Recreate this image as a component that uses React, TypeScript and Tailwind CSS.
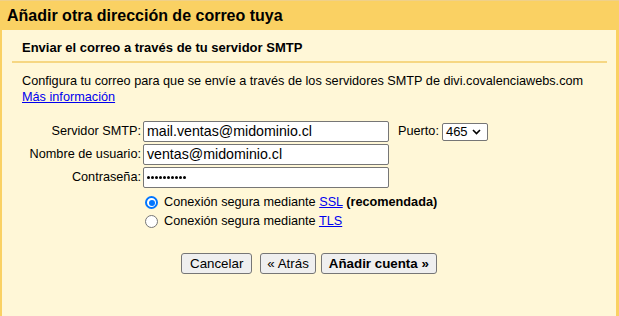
import React from "react";

export default function App() {
  const font = { fontFamily: '"Liberation Sans", Arial, sans-serif' };
  return (
    <div className="w-[619px] h-[316px] bg-[#fad163] flex flex-col text-[12.7px] text-black overflow-hidden" style={font}>
      <div className="h-[30px] shrink-0 pl-[7px] pt-[5px] text-[16px] font-bold leading-[19px] border-t border-[#efd08a]">
        Añadir otra dirección de correo tuya
      </div>
      <div className="flex-1 ml-[2px] mr-[3px] bg-[#fff7d7] flex flex-col">
        <div className="pl-[20px] pt-[10px] h-[31px] font-bold leading-[15px] text-[13px]">
          Enviar el correo a través de tu servidor SMTP
        </div>
        <div className="ml-[10px] mr-[9px] h-[2px] bg-[#f6d783]" />
        <div className="pl-[20px] pt-[10px] leading-[16px]">
          <div>Configura tu correo para que se envíe a través de los servidores SMTP de divi.covalenciawebs.com</div>
          <a className="text-[#0000ee] underline">Más información</a>
        </div>
        <div className="mt-[16px] flex flex-col gap-[2px]">
          <div className="flex items-center h-[21px]">
            <div className="w-[141px] text-right pr-[2px]">Servidor SMTP:</div>
            <div className="w-[246px] h-[21px] bg-white border border-[#767676] rounded-[2px] px-[3px] text-[14.2px] leading-[19px]">mail.ventas@midominio.cl</div>
            <div className="ml-[9px]">Puerto:</div>
            <div className="ml-[3px] h-[18px] w-[46px] bg-white border border-[#767676] rounded-[2px] flex items-center pl-[3px] gap-[4px] leading-[16px] text-[13px]">
              <span>465</span>
              <svg width="9" height="6" viewBox="0 0 9 6"><path d="M1 1l3.5 3.5L8 1" fill="none" stroke="#000" strokeWidth="1.6"/></svg>
            </div>
          </div>
          <div className="flex items-center h-[21px]">
            <div className="w-[141px] text-right pr-[2px]">Nombre de usuario:</div>
            <div className="w-[246px] h-[21px] bg-white border border-[#767676] rounded-[2px] px-[3px] text-[14.2px] leading-[19px]">ventas@midominio.cl</div>
          </div>
          <div className="flex items-center h-[21px]">
            <div className="w-[141px] text-right pr-[2px]">Contraseña:</div>
            <div className="w-[246px] h-[21px] bg-white border border-[#767676] rounded-[2px] px-[3px] flex items-center gap-[1px]">
              {Array.from({ length: 10 }).map((_, i) => (
                <span key={i} className="w-[3px] h-[3px] rounded-full bg-black inline-block" />
              ))}
            </div>
          </div>
        </div>
        <div className="mt-[5px] ml-[143px] flex flex-col">
          <div className="flex items-center h-[19px]">
            <span className="w-[13px] h-[13px] rounded-full border-[2px] border-[#0075ff] bg-white mr-[6px] box-border flex items-center justify-center">
              <span className="w-[6px] h-[6px] rounded-full bg-[#0075ff]" />
            </span>
            <span>Conexión segura mediante <a className="text-[#0000ee] underline">SSL</a> <b>(recomendada)</b></span>
          </div>
          <div className="flex items-center h-[19px]">
            <span className="w-[13px] h-[13px] rounded-full border border-[#767676] bg-white mr-[6px]" />
            <span>Conexión segura mediante <a className="text-[#0000ee] underline">TLS</a></span>
          </div>
        </div>
        <div className="mt-[22px] ml-[179px] flex items-center text-[13.33px]">
          <div className="h-[21px] px-[8px] bg-[#efefef] border border-[#767676] rounded-[3px] leading-[19px]">Cancelar</div>
          <div className="ml-[8px] h-[21px] px-[6px] bg-[#efefef] border border-[#767676] rounded-[3px] leading-[19px]">« Atrás</div>
          <div className="ml-[5px] h-[21px] px-[7px] bg-[#efefef] border border-[#767676] rounded-[3px] leading-[19px] font-bold">Añadir cuenta »</div>
        </div>
      </div>
    </div>
  );
}
